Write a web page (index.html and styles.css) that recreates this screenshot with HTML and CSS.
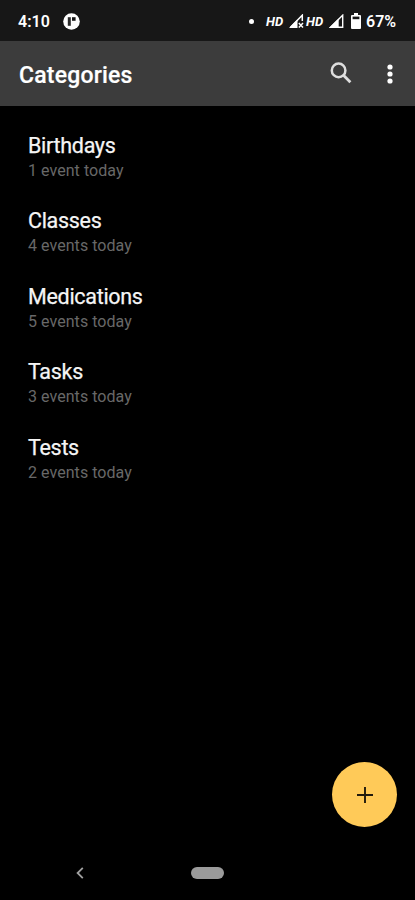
FILE: index.html
```html
<!DOCTYPE html>
<html lang="en">
<head>
  <meta charset="UTF-8" />
  <meta name="viewport" content="width=device-width, initial-scale=1.0"/>
  <title>Categories</title>
  <link rel="stylesheet" href="styles.css">
</head>
<body>

  <!-- Status bar -->
  <div class="status-bar">
    <span class="time">4:10</span>
    <svg class="app-badge" width="17" height="17" viewBox="0 0 17 17">
      <circle cx="8.5" cy="8.5" r="8.3" fill="#fff"/>
      <path d="M4.8 4.2H7.8V12.8H4.8Z" fill="#2a2a2a"/>
      <path d="M9 4.2H12.6V7.8H9Z" fill="#171717"/>
    </svg>

    <div class="status-icons">
      <span class="dot"></span>
      <span class="hd">HD</span>
      <svg class="signal" width="15" height="14" viewBox="0 0 15 14">
        <path d="M1.5 13.2L13.3 1.2V7" fill="none" stroke="#fff" stroke-width="1.5"/>
        <path d="M0 14L8.5 5.5V14Z" fill="#fff"/>
        <path d="M9.8 9L14 13.4M14 9L9.8 13.4" stroke="#fff" stroke-width="1.5"/>
      </svg>
      <span class="hd second">HD</span>
      <svg class="signal" width="15" height="14" viewBox="0 0 15 14">
        <path d="M1.5 13.2L13.7 1.2V13.2Z" fill="none" stroke="#fff" stroke-width="1.4"/>
        <path d="M0 14L9.7 4.4V14Z" fill="#fff"/>
      </svg>
      <svg class="battery" width="10" height="16" viewBox="0 0 10 16">
        <path d="M3 0H7V2H9Q10 2 10 3V15Q10 16 9 16H1Q0 16 0 15V3Q0 2 1 2H3Z" fill="#fff"/>
        <path d="M1.6 3.6H8.4V6.2H1.6Z" fill="#171717"/>
      </svg>
      <span class="percent">67%</span>
    </div>
  </div>

  <!-- App bar -->
  <header class="app-bar">
    <h1>Categories</h1>
    <button class="icon-btn search" aria-label="Search">
      <svg width="22" height="22" viewBox="0 0 22 22" fill="none" stroke="#dedede">
        <circle cx="8.6" cy="8.4" r="6.8" stroke-width="2.5"/>
        <path d="M13.2 13L20.4 20.2" stroke-width="2.8"/>
      </svg>
    </button>
    <button class="icon-btn" aria-label="More options">
      <svg width="6" height="20" viewBox="0 0 6 20" fill="#fff">
        <circle cx="3" cy="3" r="2.6"/>
        <circle cx="3" cy="10" r="2.6"/>
        <circle cx="3" cy="17" r="2.6"/>
      </svg>
    </button>
  </header>

  <!-- Category list -->
  <main class="categories">
    <div class="category">
      <div class="name">Birthdays</div>
      <div class="count">1 event today</div>
    </div>
    <div class="category">
      <div class="name">Classes</div>
      <div class="count">4 events today</div>
    </div>
    <div class="category">
      <div class="name">Medications</div>
      <div class="count">5 events today</div>
    </div>
    <div class="category">
      <div class="name">Tasks</div>
      <div class="count">3 events today</div>
    </div>
    <div class="category">
      <div class="name">Tests</div>
      <div class="count">2 events today</div>
    </div>
  </main>

  <button class="fab" aria-label="Add category">
    <svg width="16" height="16" viewBox="0 0 16 16">
      <path d="M8 0V16M0 8H16" stroke="#221b0c" stroke-width="1.9"/>
    </svg>
  </button>

  <!-- System navigation -->
  <nav class="nav-bar">
    <svg class="back" width="8" height="12" viewBox="0 0 8 12">
      <path d="M6.8 0.8L1.6 6L6.8 11.2" fill="none" stroke="#a0a0a0" stroke-width="1.8"/>
    </svg>
    <span class="home"></span>
  </nav>

</body>
</html>
```

FILE: styles.css
```css
* {
  box-sizing: border-box;
}

body {
  margin: 0;
  height: 100vh;
  display: flex;
  flex-direction: column;
  background: #000;
  color: #fff;
  font-family: Roboto, sans-serif;
  overflow: hidden;
}

button {
  border: none;
  padding: 0;
  background: none;
  cursor: pointer;
}

svg {
  display: block;
}

.status-bar {
  height: 41px;
  flex: none;
  display: flex;
  align-items: center;
  padding: 1px 19px 0 18px;
  background: #171717;
  font-size: 16px;
  font-weight: 600;
}

.time {
  width: 45px;
}

.status-icons {
  margin-left: auto;
  display: flex;
  align-items: center;
}

.dot {
  width: 5px;
  height: 5px;
  margin-right: 12px;
  border-radius: 50%;
  background: #fff;
}

.hd {
  width: 23px;
  font-size: 13px;
  font-weight: 700;
  font-style: italic;
}

.hd.second {
  margin-left: 2px;
}

.battery {
  margin: 0 5px 0 7px;
}

.percent {
  width: 30px;
}

.app-bar {
  height: 65px;
  flex: none;
  display: flex;
  align-items: center;
  padding: 0 22px 0 19px;
  background: #3c3c3c;
}

.app-bar h1 {
  flex: 1;
  margin: 3px 0 0;
  font-size: 23px;
  font-weight: 500;
  letter-spacing: 0.2px;
  -webkit-text-stroke: 0.2px #fff;
}

.search {
  margin: 0 35px 1px 0;
}

.categories {
  flex: 1;
  padding: 25.6px 28px 0;
}

.category {
  height: 75.6px;
}

.name {
  font-size: 21.5px;
  line-height: 27px;
  letter-spacing: -0.3px;
  color: #f5f5f5;
  -webkit-text-stroke: 0.25px #f5f5f5;
}

.count {
  font-size: 16px;
  line-height: 24px;
  letter-spacing: 0.05px;
  color: #686868;
}

/* floats over the list */
.fab {
  position: absolute;
  right: 18px;
  bottom: 73px;
  width: 65px;
  height: 65px;
  display: flex;
  align-items: center;
  justify-content: center;
  border-radius: 50%;
  background: #ffca58;
}

.nav-bar {
  height: 54px;
  flex: none;
  display: grid;
  grid-template-columns: 1fr 33px 1fr;
  align-items: center;
}

.back {
  margin-left: 76px;
}

.home {
  height: 12px;
  border-radius: 6px;
  background: #9b9b9b;
}
```
